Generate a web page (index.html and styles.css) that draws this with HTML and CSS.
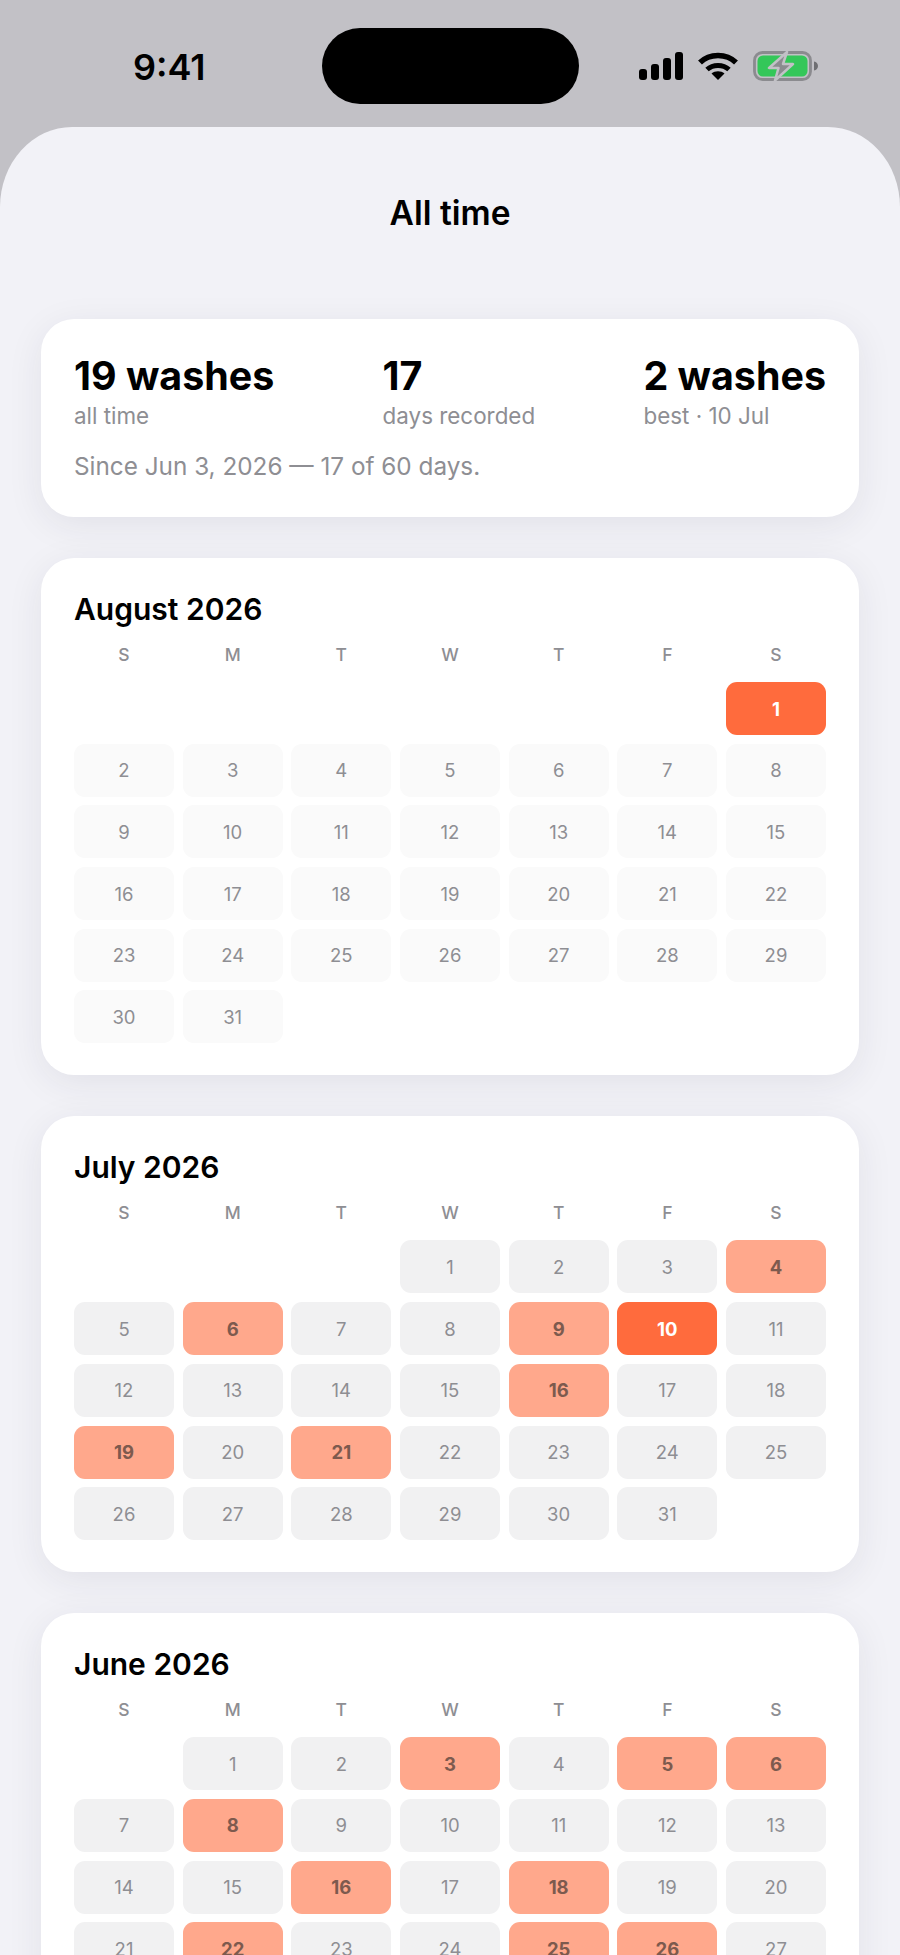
FILE: index.html
```html
<!DOCTYPE html>
<html lang="en">
<head>
    <meta charset="UTF-8">
    <meta name="viewport" content="width=device-width, initial-scale=1.0">
    <title>All time</title>
    <link rel="stylesheet" href="styles.css">
</head>
<body>
    <div class="status">
        <span class="time">9:41</span>
        <div class="island"></div>
        <div class="status-icons">
            <svg class="signal" width="44" height="28" viewBox="0 0 44 28">
                <rect x="0" y="17" width="8" height="11" rx="3"/>
                <rect x="12" y="12" width="8" height="16" rx="3"/>
                <rect x="24" y="6" width="8" height="22" rx="3"/>
                <rect x="36" y="0" width="8" height="28" rx="3"/>
            </svg>
            <svg class="wifi" width="40" height="28" viewBox="0 0 40 28">
                <path d="M2 10.5C11.5 1 28.5 1 38 10.5" fill="none" stroke="#000" stroke-width="5.500"/>
                <path d="M9 17.5C15 12 25 12 31 17.5" fill="none" stroke="#000" stroke-width="5"/>
                <path d="M13.5 21.5C17 18.500 23 18.500 26.500 21.500L20 28Z"/>
            </svg>
            <svg class="battery" width="66" height="30" viewBox="0 0 66 30">
                <rect x="1.500" y="1.500" width="56" height="27" rx="8" fill="none" stroke="#8b8b8f" stroke-width="2.800"/>
                <rect x="4.500" y="4.500" width="50" height="21" rx="5.500" fill="#34c759"/>
                <path d="M61 10.500c2.500.5 4 2.200 4 4.500s-1.500 4-4 4.500z" fill="#6f6f73"/>
                <path d="M34 1L16 17h9.500l-3.500 12.500 18-16.500h-10z" fill="#8b8b8f" stroke="#c2c1c6" stroke-width="2.500" stroke-linejoin="round"/>
            </svg>
        </div>
    </div>

    <main class="sheet">
        <h1 class="page-title">All time</h1>

        <section class="card summary">
            <div class="stats">
                <div>
                    <div class="stat-value">19 washes</div>
                    <div class="stat-label">all time</div>
                </div>
                <div>
                    <div class="stat-value">17</div>
                    <div class="stat-label">days recorded</div>
                </div>
                <div>
                    <div class="stat-value">2 washes</div>
                    <div class="stat-label">best · 10 Jul</div>
                </div>
            </div>
            <p class="since">Since Jun 3, 2026 — 17 of 60 days.</p>
        </section>

        <section class="card">
            <h2 class="month">August 2026</h2>
            <div class="weekdays">
                <span>S</span><span>M</span><span>T</span><span>W</span><span>T</span><span>F</span><span>S</span>
            </div>
            <div class="days future">
                <span class="blank"></span><span class="blank"></span><span class="blank"></span><span class="blank"></span><span class="blank"></span><span class="blank"></span><span class="day best">1</span>
                <span class="day">2</span><span class="day">3</span><span class="day">4</span><span class="day">5</span><span class="day">6</span><span class="day">7</span><span class="day">8</span>
                <span class="day">9</span><span class="day">10</span><span class="day">11</span><span class="day">12</span><span class="day">13</span><span class="day">14</span><span class="day">15</span>
                <span class="day">16</span><span class="day">17</span><span class="day">18</span><span class="day">19</span><span class="day">20</span><span class="day">21</span><span class="day">22</span>
                <span class="day">23</span><span class="day">24</span><span class="day">25</span><span class="day">26</span><span class="day">27</span><span class="day">28</span><span class="day">29</span>
                <span class="day">30</span><span class="day">31</span>
            </div>
        </section>

        <section class="card">
            <h2 class="month">July 2026</h2>
            <div class="weekdays">
                <span>S</span><span>M</span><span>T</span><span>W</span><span>T</span><span>F</span><span>S</span>
            </div>
            <div class="days">
                <span class="blank"></span><span class="blank"></span><span class="blank"></span><span class="day">1</span><span class="day">2</span><span class="day">3</span><span class="day washed">4</span>
                <span class="day">5</span><span class="day washed">6</span><span class="day">7</span><span class="day">8</span><span class="day washed">9</span><span class="day best">10</span><span class="day">11</span>
                <span class="day">12</span><span class="day">13</span><span class="day">14</span><span class="day">15</span><span class="day washed">16</span><span class="day">17</span><span class="day">18</span>
                <span class="day washed">19</span><span class="day">20</span><span class="day washed">21</span><span class="day">22</span><span class="day">23</span><span class="day">24</span><span class="day">25</span>
                <span class="day">26</span><span class="day">27</span><span class="day">28</span><span class="day">29</span><span class="day">30</span><span class="day">31</span>
            </div>
        </section>

        <section class="card">
            <h2 class="month">June 2026</h2>
            <div class="weekdays">
                <span>S</span><span>M</span><span>T</span><span>W</span><span>T</span><span>F</span><span>S</span>
            </div>
            <div class="days">
                <span class="blank"></span><span class="day">1</span><span class="day">2</span><span class="day washed">3</span><span class="day">4</span><span class="day washed">5</span><span class="day washed">6</span>
                <span class="day">7</span><span class="day washed">8</span><span class="day">9</span><span class="day">10</span><span class="day">11</span><span class="day">12</span><span class="day">13</span>
                <span class="day">14</span><span class="day">15</span><span class="day washed">16</span><span class="day">17</span><span class="day washed">18</span><span class="day">19</span><span class="day">20</span>
                <span class="day">21</span><span class="day washed">22</span><span class="day">23</span><span class="day">24</span><span class="day washed">25</span><span class="day washed">26</span><span class="day">27</span>
            </div>
        </section>
    </main>
</body>
</html>
```

FILE: styles.css
```css
html,
body {
    margin: 0;
    height: 1955px;
    overflow: hidden;
}
body {
    background-color: #c2c1c6;
    font-family: Inter, "Liberation Sans", sans-serif;
    color: #000;
}

/* status bar */
.status {
    display: grid;
    grid-template-columns: 1fr 257px 1fr;
    height: 127px;
    padding-left: 1px;
    box-sizing: border-box;
}
.time {
    margin-top: 46px;
    padding-left: 132px;
    font-size: 36px;
    line-height: 42px;
    font-weight: 600;
}
.island {
    margin-top: 28px;
    height: 76px;
    border-radius: 38px;
    background-color: #000;
}
.status-icons {
    display: flex;
    justify-content: flex-end;
    align-items: flex-start;
    gap: 15px;
    padding: 52px 81px 0 0;
}
.battery {
    margin-top: -1px;
}

/* sheet */
.sheet {
    padding: 0 41px;
    background-color: #f2f2f7;
    border-radius: 72px 72px 0 0 / 80px 80px 0 0;
    height: 1828px;
}
.page-title {
    margin: 0;
    padding: 66px 0 86px;
    font-size: 33.5px;
    line-height: 40px;
    font-weight: 600;
    text-align: center;
}

.card {
    margin-bottom: 41px;
    padding: 33px 33px 32px;
    background-color: #fff;
    border-radius: 33px;
    box-shadow: 0 8px 36px rgba(40, 40, 70, 0.08);
}

/* summary card */
.summary {
    height: 198px;
    box-sizing: border-box;
    margin-bottom: 41px;
}
.stats {
    display: flex;
    justify-content: space-between;
}
.stat-value {
    margin-top: 1px;
    font-size: 39.4px;
    line-height: 46px;
    font-weight: 650;
}
.stat-label {
    margin-top: 4px;
    font-size: 22.4px;
    line-height: 26px;
    color: #8e8e93;
}
.since {
    margin: 23px 0 0;
    font-size: 24.3px;
    line-height: 28px;
    color: #8e8e93;
}

/* calendars */
.month {
    margin: 0;
    font-size: 30px;
    line-height: 36px;
    font-weight: 600;
}
.weekdays,
.days {
    display: grid;
    grid-template-columns: repeat(7, 1fr);
    column-gap: 8.67px;
}
.weekdays {
    margin-top: 15px;
    height: 40px;
    font-size: 17.5px;
    line-height: 26px;
    font-weight: 500;
    text-align: center;
    color: #8e8e93;
}
.days {
    row-gap: 8.7px;
}
.day {
    display: flex;
    align-items: center;
    justify-content: center;
    height: 53px;
    border-radius: 11px;
    background-color: #f1f1f2;
    font-size: 18.500px;
    color: #8e8e93;
}
.future .day {
    background-color: #fafafa;
}
.day.washed {
    background-color: #ffa88c;
    color: #7d5a4e;
    font-weight: 700;
}
.future .day.best,
.day.best {
    background-color: #ff6b3d;
    color: #fff;
    font-weight: 700;
}
```
